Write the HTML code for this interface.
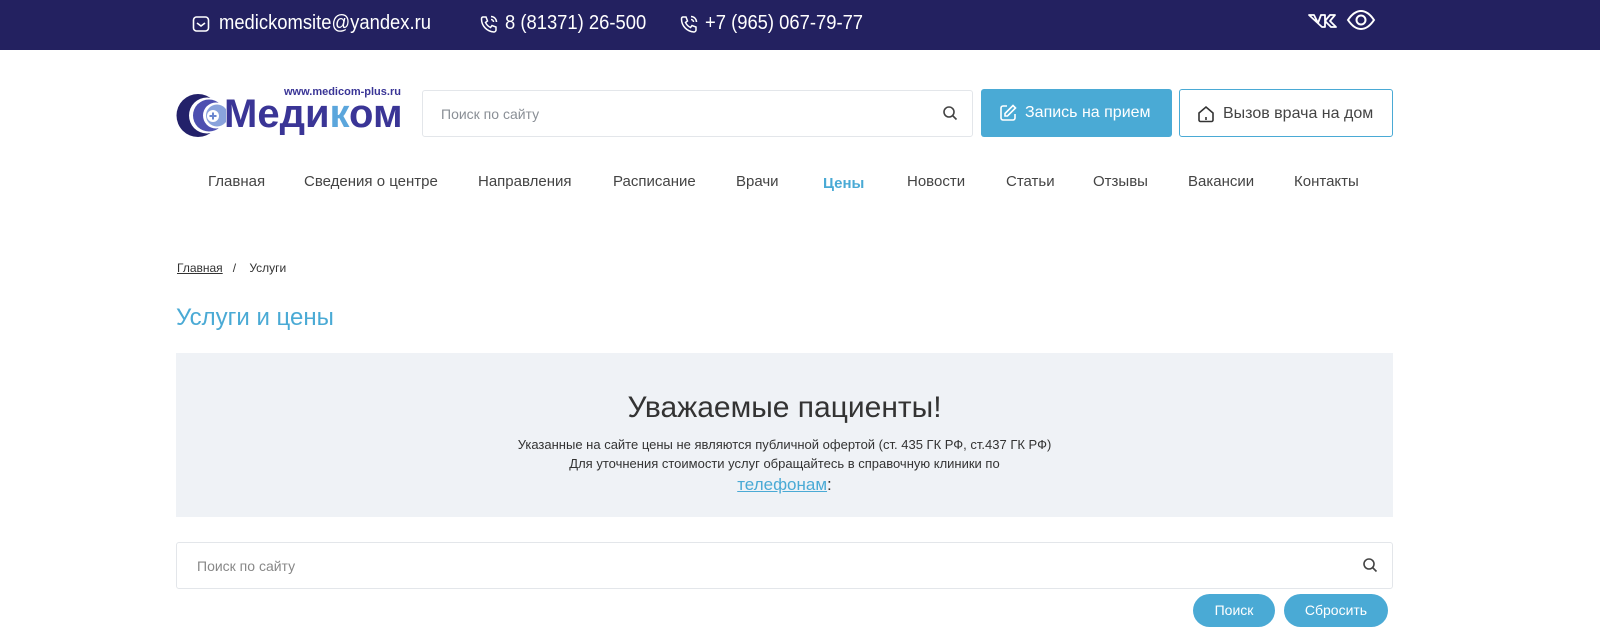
<!DOCTYPE html>
<html><head><meta charset="utf-8"><style>
*{margin:0;padding:0;box-sizing:border-box}
body{width:1600px;height:643px;background:#fff;font-family:"Liberation Sans","DejaVu Sans",sans-serif;color:#333;position:relative;overflow:hidden}
.top{position:absolute;left:0;top:0;width:1600px;height:50px;background:#232160;color:#fff;font-family:"Liberation Sans",sans-serif;font-size:20px}
.top span{position:absolute;top:12px;white-space:nowrap;transform-origin:0 0;transform:scaleX(0.92)}
.abs{position:absolute}
.search{position:absolute;left:422px;top:90px;width:551px;height:47px;border:1px solid #e3e6ea;border-radius:3px;font-size:14px;color:#8a8f96;padding:15px 18px}
.btn1{position:absolute;left:981px;top:89px;width:191px;height:48px;background:#4aaad5;border-radius:3px;color:#fff;font-size:16px}
.btn2{position:absolute;left:1179px;top:89px;width:214px;height:48px;border:1px solid #4aaad5;border-radius:3px;color:#444;font-size:16px}
.nav{position:absolute;top:173px;font-size:15px;color:#444;white-space:nowrap}
.banner{position:absolute;left:176px;top:353px;width:1217px;height:164px;background:#eff2f6;text-align:center}
.pill{position:absolute;top:594px;height:33px;border-radius:17px;background:#4aaad5;color:#fff;font-size:14px;text-align:center;line-height:33px}
</style></head><body>
<div class="top">
<svg class="abs" style="left:192px;top:15px" width="18" height="18" viewBox="0 0 18 18" fill="none" stroke="#fff" stroke-width="1.6"><rect x="1.5" y="2" width="15" height="14" rx="3"/><path d="M5 8l4 3 4-3"/></svg>
<span style="left:219px">medickomsite@yandex.ru</span>
<svg class="abs" style="left:479px;top:14px" width="20" height="20" viewBox="0 0 20 20" fill="none" stroke="#fff" stroke-width="1.5"><path d="M4 3l3 0 1.5 4-2 1.5c1 2.2 2.7 3.9 5 5l1.5-2 4 1.5v3c0 1-1 2-2 2C8 17.5 2.5 12 2.5 5c0-1 .5-2 1.5-2z"/><path d="M12 2.5a5.5 5.5 0 015.5 5.5M12 5.5a2.5 2.5 0 012.5 2.5"/></svg>
<span style="left:505px">8 (81371) 26-500</span>
<svg class="abs" style="left:679px;top:14px" width="20" height="20" viewBox="0 0 20 20" fill="none" stroke="#fff" stroke-width="1.5"><path d="M4 3l3 0 1.5 4-2 1.5c1 2.2 2.7 3.9 5 5l1.5-2 4 1.5v3c0 1-1 2-2 2C8 17.5 2.5 12 2.5 5c0-1 .5-2 1.5-2z"/><path d="M12 2.5a5.5 5.5 0 015.5 5.5M12 5.5a2.5 2.5 0 012.5 2.5"/></svg>
<span style="left:705px">+7 (965) 067-79-77</span>
<svg class="abs" style="left:1307px;top:10px" width="32" height="22" viewBox="0 0 32 22" fill="none" stroke="#fff" stroke-width="1.8" stroke-linejoin="round"><path d="M2 5h5l4 8 3-8h4v12h-3z M18 11l5-6h5l-5 6 6 6h-5z"/></svg>
<svg class="abs" style="left:1346px;top:7px" width="30" height="26" viewBox="0 0 30 26" fill="none" stroke="#fff" stroke-width="2"><path d="M2 13c4-6 8-9 13-9s9 3 13 9c-4 6-8 9-13 9S6 19 2 13z"/><circle cx="15" cy="13" r="4.5"/></svg>
</div>
<svg class="abs" style="left:176px;top:93px" width="50" height="45" viewBox="0 0 50 45"><circle cx="22" cy="22.5" r="21.5" fill="#23216a"/><circle cx="31" cy="22.5" r="18" fill="#fff"/><circle cx="33" cy="22.5" r="16" fill="#4d4fb0"/><circle cx="40" cy="22.5" r="13" fill="#fff"/><circle cx="41" cy="22.5" r="11" fill="#8aa3dc"/><circle cx="37" cy="23" r="6" fill="#fff"/><path d="M37 19.5v7M33.5 23h7" stroke="#6a86cf" stroke-width="2"/></svg>
<div class="abs" style="left:284px;top:86px;font-size:11px;font-weight:bold;color:#3a3596">www.medicom-plus.ru</div>
<div class="abs" style="left:224px;top:92px;font-size:40px;font-weight:bold;color:#3a3596">Меди<span style="color:#5ba6dc">к</span>ом</div>
<div class="search">Поиск по сайту</div>
<svg class="abs" style="left:942px;top:105px" width="16" height="16" viewBox="0 0 16 16" fill="none" stroke="#444" stroke-width="1.6"><circle cx="7" cy="7" r="5"/><path d="M11 11l3.5 3.5"/></svg>
<div class="btn1"><svg class="abs" style="left:17px;top:14px" width="20" height="20" viewBox="0 0 20 20" fill="none" stroke="#fff" stroke-width="1.6"><path d="M9 3H5a2 2 0 00-2 2v10a2 2 0 002 2h10a2 2 0 002-2v-4"/><path d="M15 2.5l2.5 2.5-8 8H7v-2.5z"/></svg><span class="abs" style="left:44px;top:15px">Запись на прием</span></div>
<div class="btn2"><svg class="abs" style="left:16px;top:14px" width="20" height="20" viewBox="0 0 20 20" fill="none" stroke="#333" stroke-width="1.6"><path d="M3 9l7-6 7 6v7a1.5 1.5 0 01-1.5 1.5h-11A1.5 1.5 0 013 16z"/><path d="M10 13v3"/></svg><span class="abs" style="left:43px;top:15px">Вызов врача на дом</span></div>
<div class="nav" style="left:208px">Главная</div>
<div class="nav" style="left:304px">Сведения о центре</div>
<div class="nav" style="left:478px">Направления</div>
<div class="nav" style="left:613px">Расписание</div>
<div class="nav" style="left:736px">Врачи</div>
<div class="nav" style="left:823px;color:#4aaad5;font-weight:bold;top:175px">Цены</div>
<div class="nav" style="left:907px">Новости</div>
<div class="nav" style="left:1006px">Статьи</div>
<div class="nav" style="left:1093px">Отзывы</div>
<div class="nav" style="left:1188px">Вакансии</div>
<div class="nav" style="left:1294px">Контакты</div>
<div class="abs" style="left:177px;top:261px;font-size:12px;color:#333"><span style="text-decoration:underline">Главная</span>&nbsp;&nbsp;&nbsp;/&nbsp;&nbsp;&nbsp;&nbsp;Услуги</div>
<div class="abs" style="left:176px;top:304px;font-size:24px;color:#4aaad5">Услуги и цены</div>
<div class="banner">
<div style="position:absolute;top:38px;width:100%;font-size:30px;color:#333">Уважаемые пациенты!</div>
<div style="position:absolute;top:82px;width:100%;font-size:13px;line-height:19px;color:#333">Указанные на сайте цены не являются публичной офертой (ст. 435 ГК РФ, ст.437 ГК РФ)<br>Для уточнения стоимости услуг обращайтесь в справочную клиники по</div>
<div style="position:absolute;top:122px;width:100%;font-size:17px;color:#333"><span style="color:#4aaad5;text-decoration:underline">телефонам</span>:</div>
</div>
<div class="search" style="left:176px;top:542px;width:1217px;height:47px;padding-left:20px;color:#888">Поиск по сайту</div>
<svg class="abs" style="left:1362px;top:557px" width="16" height="16" viewBox="0 0 16 16" fill="none" stroke="#444" stroke-width="1.6"><circle cx="7" cy="7" r="5"/><path d="M11 11l3.5 3.5"/></svg>
<div class="pill" style="left:1193px;width:82px">Поиск</div>
<div class="pill" style="left:1284px;width:104px">Сбросить</div>
</body></html>
